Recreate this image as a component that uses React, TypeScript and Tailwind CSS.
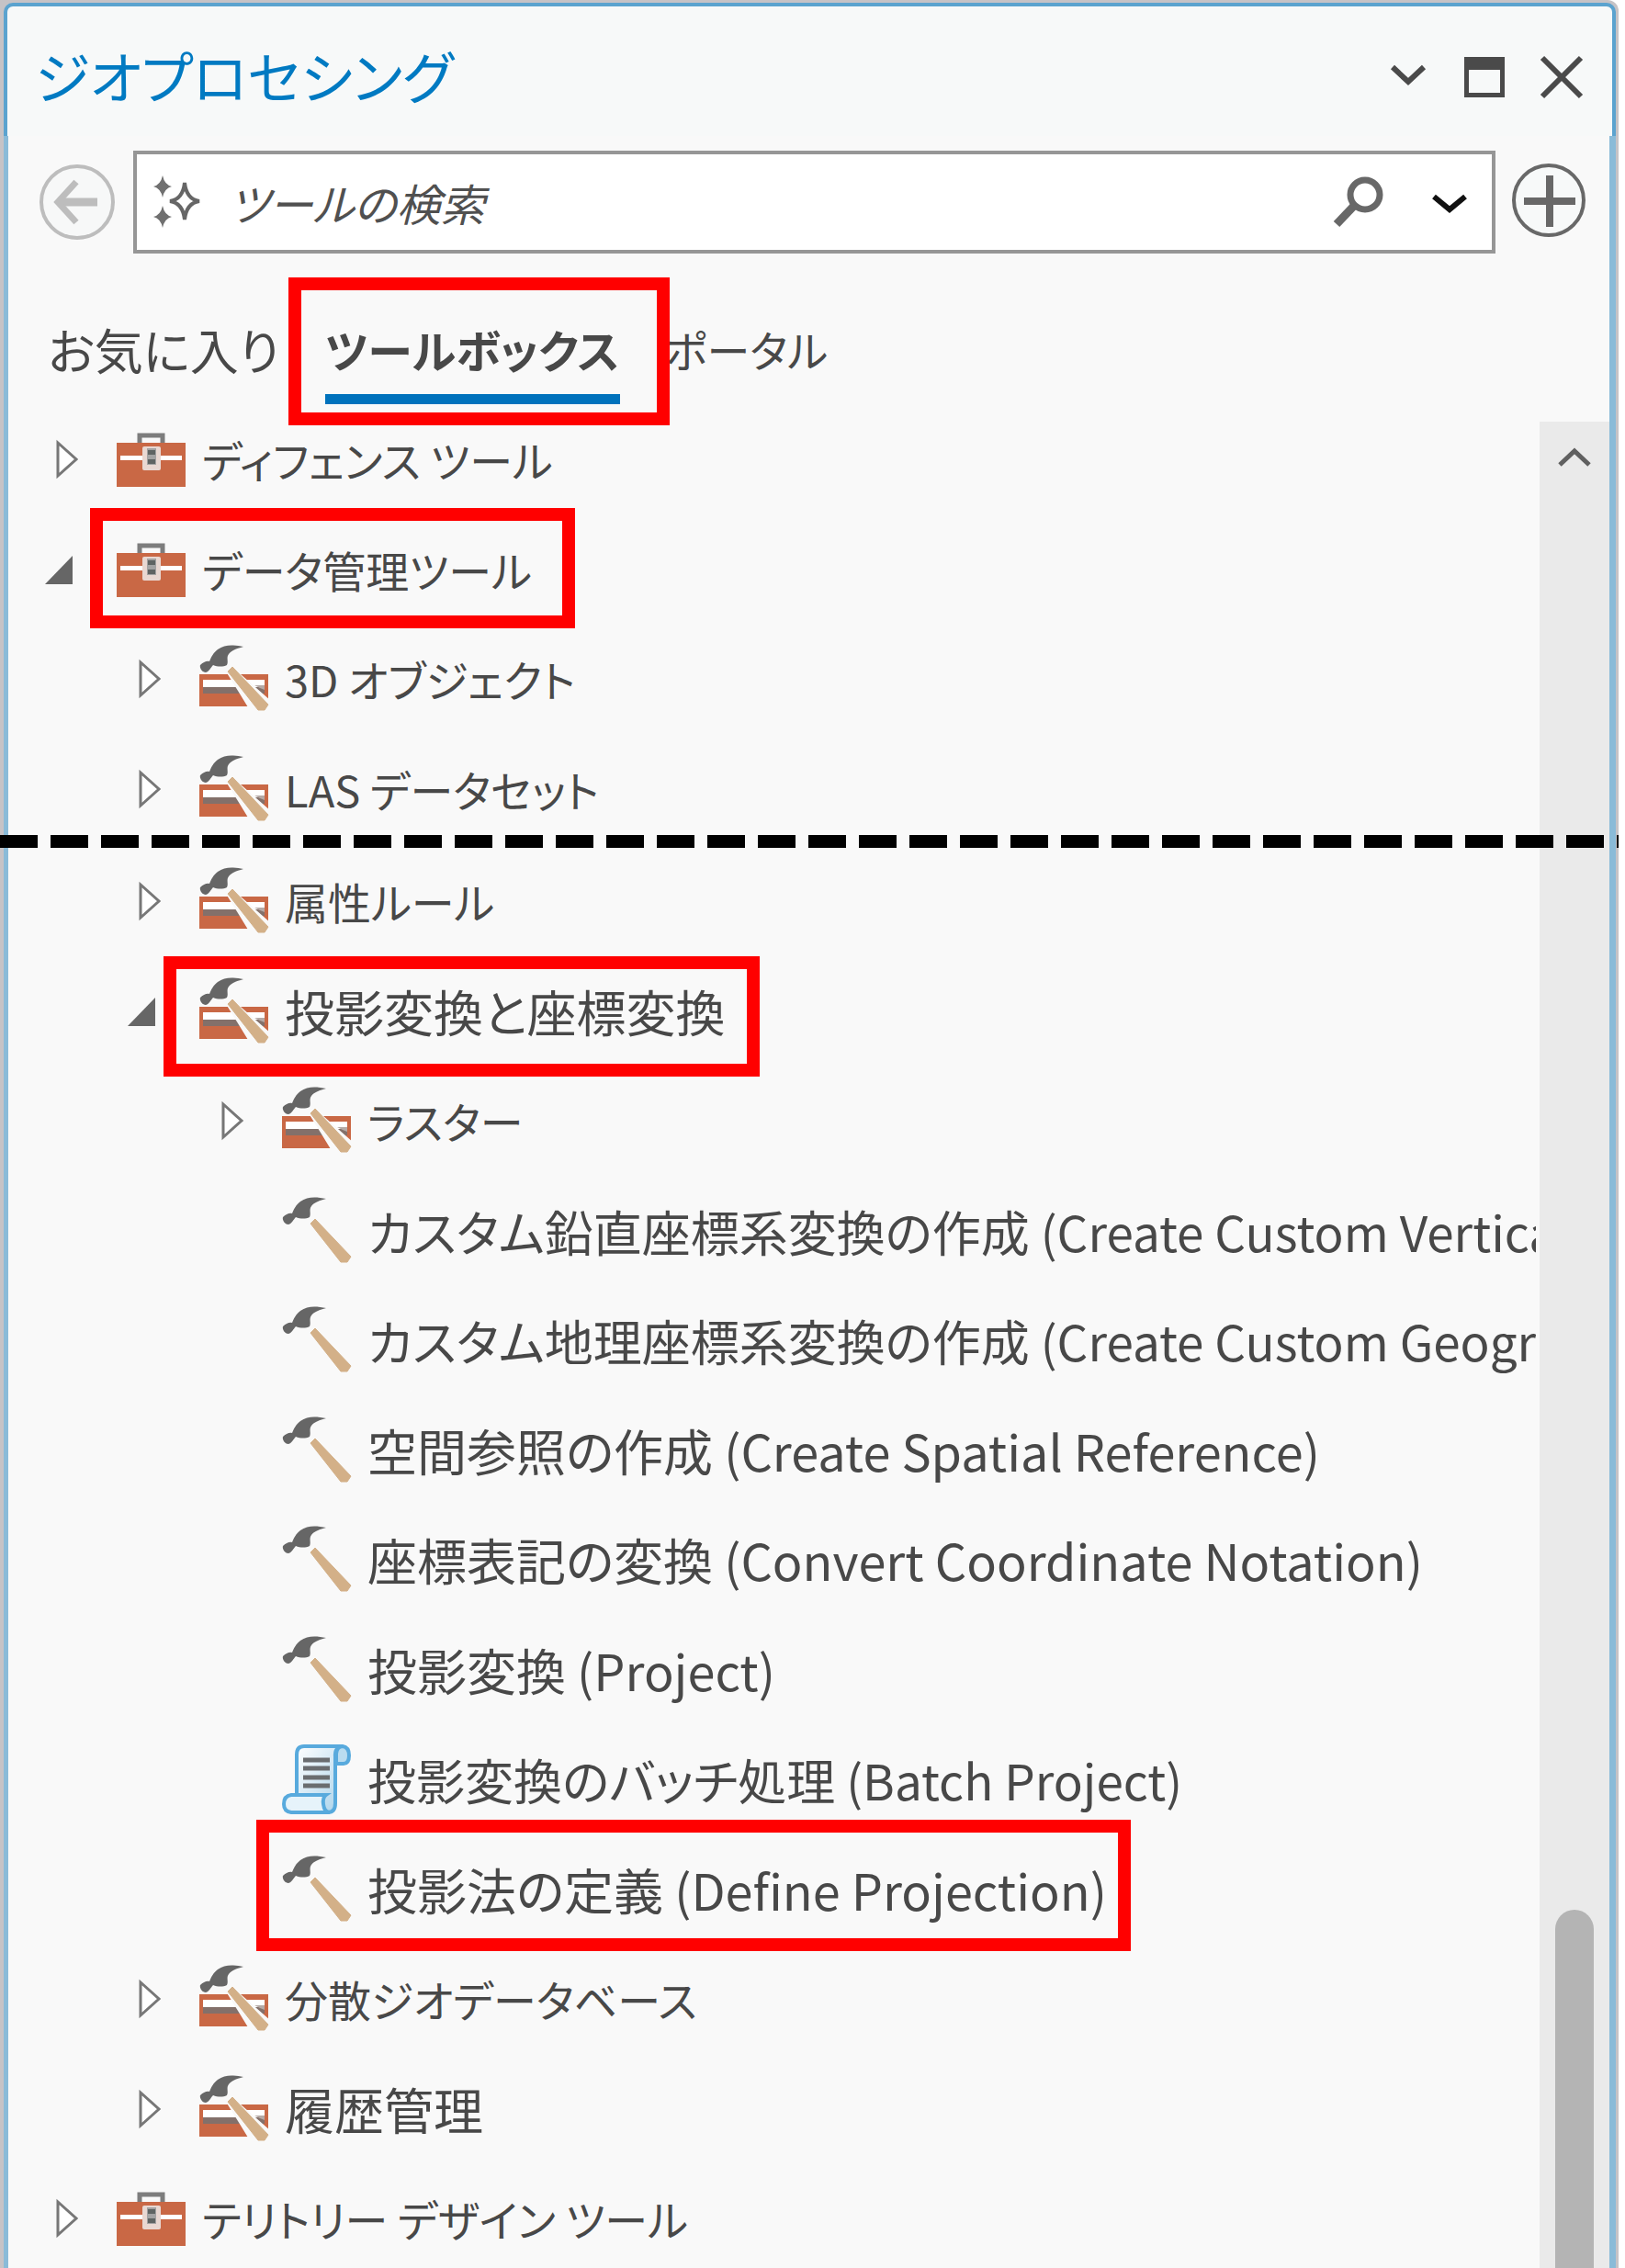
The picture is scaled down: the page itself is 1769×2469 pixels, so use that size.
import { useState } from 'react';
import clsx from 'clsx';

type IconKind = 'toolbox' | 'toolset' | 'tool' | 'script';

interface TreeItem {
    label: string;
    level: 0 | 1 | 2;
    icon: IconKind;
    size: 'kana' | 'mixed' | 'kanji';
    expanded?: boolean;
    mark?: string;
}

const upperItems: TreeItem[] = [
    { label: 'ディフェンス ツール', level: 0, icon: 'toolbox', size: 'kana', expanded: false },
    { label: 'データ管理ツール', level: 0, icon: 'toolbox', size: 'kana', expanded: true, mark: '-left-[29px] -top-[7px] -bottom-[5px] w-[528px]' },
    { label: '3D オブジェクト', level: 1, icon: 'toolset', size: 'kana', expanded: false },
    { label: 'LAS データセット', level: 1, icon: 'toolset', size: 'kana', expanded: false },
];

const lowerItems: TreeItem[] = [
    { label: '属性ルール', level: 1, icon: 'toolset', size: 'kana', expanded: false },
    { label: '投影変換と座標変換', level: 1, icon: 'toolset', size: 'kanji', expanded: true, mark: '-left-[39px] top-0 -bottom-3 w-[649px]' },
    { label: 'ラスター', level: 2, icon: 'toolset', size: 'kana', expanded: false },
    { label: 'カスタム鉛直座標系変換の作成 (Create Custom Vertical Transformation)', level: 2, icon: 'tool', size: 'mixed' },
    { label: 'カスタム地理座標系変換の作成 (Create Custom Geographic Transformation)', level: 2, icon: 'tool', size: 'mixed' },
    { label: '空間参照の作成 (Create Spatial Reference)', level: 2, icon: 'tool', size: 'kanji' },
    { label: '座標表記の変換 (Convert Coordinate Notation)', level: 2, icon: 'tool', size: 'kanji' },
    { label: '投影変換 (Project)', level: 2, icon: 'tool', size: 'kanji' },
    { label: '投影変換のバッチ処理 (Batch Project)', level: 2, icon: 'script', size: 'mixed' },
    { label: '投影法の定義 (Define Projection)', level: 2, icon: 'tool', size: 'kanji', mark: '-left-7 -top-4 -bottom-2 w-[952px]' },
    { label: '分散ジオデータベース', level: 1, icon: 'toolset', size: 'kana', expanded: false },
    { label: '履歴管理', level: 1, icon: 'toolset', size: 'kanji', expanded: false },
    { label: 'テリトリー デザイン ツール', level: 0, icon: 'toolbox', size: 'kana', expanded: false },
];

const indent = ['pl-[36px]', 'pl-[126px]', 'pl-[216px]'];

const labelSize = {
    kana: 'text-[47px]',
    mixed: 'text-[53px]',
    kanji: 'text-[54px]',
};

function Hammer() {
    return (
        <>
            <path d="M48 3C38 1 28 0 20 6C15 10 13 14 11 19C8 18 4 20 1 23C0 26 3 31 7 31C11 30 12 26 15 23C20 25 26 25 30 23C32 19 29 15 32 11C35 7 41 5 48 3Z" fill="#666" />
            <path d="M36 25L31 30L64 72L71 72L75 66Z" fill="#d3b088" stroke="#d3b088" strokeWidth="1" strokeLinejoin="round" />
        </>
    );
}

function ItemIcon({ kind }: { kind: IconKind }) {
    return (
        <svg viewBox="0 0 76 76" className="size-[76px] shrink-0" aria-hidden="true">
            {kind === 'toolbox' && (
                <>
                    <path d="M25 21V12H50V21" fill="none" stroke="#7d7d7d" strokeWidth="5" />
                    <rect x="0" y="20" width="75" height="48" fill="#c96845" />
                    <rect x="4" y="34" width="67" height="5" fill="#fff" />
                    <rect x="28" y="24" width="20" height="26" rx="2" fill="#e9d8d2" />
                    <rect x="33" y="26" width="10" height="18" fill="#a3a3a3" />
                    <rect x="34" y="28" width="8" height="5" fill="#5f6463" />
                    <rect x="34" y="38" width="8" height="5" fill="#5f6463" />
                </>
            )}
            {kind === 'toolset' && (
                <>
                    <rect x="0" y="33" width="75" height="35" fill="#c96845" />
                    <rect x="4" y="39" width="67" height="8" fill="#fff" />
                    <rect x="4" y="47" width="67" height="7" fill="#83706a" />
                    <path d="M29 30L36 25L78 62V69H53L42 51Z" fill="#f9f9f9" />
                    <path d="M56 33H75V57L71 53V39H56Z" fill="#c96845" />
                    <path d="M60 45H71V50L66 48Z" fill="#b5aaa6" />
                    <Hammer />
                </>
            )}
            {kind === 'tool' && <Hammer />}
            {kind === 'script' && (
                <>
                    <defs>
                        <linearGradient id="paper" x1="0" y1="0" x2="1" y2="1">
                            <stop offset="0" stopColor="#fff" />
                            <stop offset="1" stopColor="#a9d2ea" />
                        </linearGradient>
                    </defs>
                    <path d="M16 56V11Q16 2 24 2H66Q57 3 58 14V64Q58 74 50 74H24Z" fill="url(#paper)" stroke="#58aadd" strokeWidth="4" />
                    <path d="M59 21V10Q60 2 66 2Q73 3 73 12Q73 21 67 21Z" fill="#b9dcf0" stroke="#58aadd" strokeWidth="4" />
                    <path d="M10 55H48Q44 58 45 65Q46 74 52 74H10Q2 73 2 65Q2 56 10 55Z" fill="#e6f3fa" stroke="#58aadd" strokeWidth="4" />
                    <path d="M23 17H52M23 26H52M23 36H52M23 45H52" stroke="#6a6d70" strokeWidth="5" />
                </>
            )}
        </svg>
    );
}

function TreeRow({ item }: { item: TreeItem }) {
    const [expanded, setExpanded] = useState(item.expanded);

    return (
        <li className={clsx('flex odd:h-[120px] even:h-[119px] items-center whitespace-nowrap', indent[item.level])}>
            <div className="w-[82px] shrink-0">
                {expanded !== undefined && (
                    <button type="button" aria-label={item.label} onClick={() => setExpanded(!expanded)} className="block">
                        <svg viewBox="0 0 44 44" className="size-11" aria-hidden="true">
                            {expanded ? (
                                <path d="M4 38L34 7V38Z" fill="#666" />
                            ) : (
                                <path d="M18 4V40L38 22Z" fill="#fff" stroke="#777" strokeWidth="3" />
                            )}
                        </svg>
                    </button>
                )}
            </div>
            <div className="relative flex h-full items-center gap-[17px]">
                <ItemIcon kind={item.icon} />
                <span className={labelSize[item.size]}>{item.label}</span>
                {item.mark && <span className={clsx('pointer-events-none absolute z-10 border-[14px] border-[#ff0000]', item.mark)} />}
            </div>
        </li>
    );
}

function TitleBar() {
    return (
        <header className="flex h-[145px] shrink-0 items-center rounded-t-[10px] border-x-[4px] border-t-[4px] border-[#5ba3cf] bg-[#f7f9f9] pt-2 pr-[31px] pl-[30px] text-[#4a4a4a]">
            <h1 className="flex-1 text-[61px] leading-[80px] text-[#007ac2]">ジオプロセシング</h1>
            <div className="flex items-center gap-[38px] pt-1">
                <button type="button" aria-label="メニュー">
                    <svg viewBox="0 0 44 48" className="h-12 w-11" fill="none" stroke="currentColor" strokeWidth="6">
                        <path d="M4 13L21 29L38 13" />
                    </svg>
                </button>
                <button type="button" aria-label="最大化">
                    <svg viewBox="0 0 44 48" className="h-12 w-11">
                        <path fill="currentColor" fillRule="evenodd" d="M0 2H44V46H0ZM5 16V41H39V16Z" />
                    </svg>
                </button>
                <button type="button" aria-label="閉じる">
                    <svg viewBox="0 0 48 48" className="size-12" fill="none" stroke="currentColor" strokeWidth="6">
                        <path d="M3 3L45 45M45 3L3 45" />
                    </svg>
                </button>
            </div>
        </header>
    );
}

function SearchBar() {
    return (
        <div className="flex h-28 shrink-0 items-center">
            <button type="button" aria-label="戻る" className="mr-[19px] ml-[33px] shrink-0">
                <svg viewBox="0 0 84 84" className="size-[84px]" fill="none" stroke="#bdbdbd">
                    <circle cx="42" cy="42" r="39" strokeWidth="4" fill="#f7f8f8" />
                    <path d="M64 42H22" strokeWidth="9" />
                    <path d="M41 20L21 42L41 64" strokeWidth="7" />
                </svg>
            </button>
            <div className="flex h-28 min-w-0 flex-1 items-center border-4 border-[#969696] bg-white pr-6 pl-4">
                <svg viewBox="0 0 56 60" className="h-[60px] w-14 shrink-0" fill="#707070">
                    <path d="M36 9Q38 27 52 29Q38 31 36 49Q34 31 20 29Q34 27 36 9Z" fill="#fff" stroke="#666" strokeWidth="4" />
                    <path d="M12 1Q14 11 22 13Q14 15 12 25Q10 15 2 13Q10 11 12 1Z" />
                    <path d="M12 34Q14 44 22 46Q14 48 12 58Q10 48 2 46Q10 44 12 34Z" />
                </svg>
                <input
                    type="text"
                    aria-label="ツールの検索"
                    placeholder="ツールの検索"
                    className="ml-7 min-w-0 flex-1 text-[48px] leading-[72px] italic outline-none placeholder:text-[#505050] placeholder:opacity-100"
                />
                <button type="button" aria-label="検索" className="shrink-0">
                    <svg viewBox="0 0 56 56" className="size-14" fill="none" stroke="#686868">
                        <circle cx="36" cy="20" r="16" strokeWidth="7" />
                        <path d="M25 31L5 52" strokeWidth="9" />
                    </svg>
                </button>
                <button type="button" aria-label="検索オプション" className="ml-[50px] shrink-0">
                    <svg viewBox="0 0 44 44" className="size-11" fill="none" stroke="#111" strokeWidth="6">
                        <path d="M5 16L22 30L39 16" />
                    </svg>
                </button>
            </div>
            <button type="button" aria-label="追加" className="mr-6 ml-4 shrink-0">
                <svg viewBox="0 0 84 84" className="size-[84px]" fill="none" stroke="#686868">
                    <circle cx="42" cy="40" r="38" strokeWidth="4" fill="#f7f9f9" />
                    <path d="M15 41H71M43 13V69" strokeWidth="8" />
                </svg>
            </button>
        </div>
    );
}

function Tabs() {
    return (
        <nav role="tablist" className="flex h-[164px] shrink-0 items-end pl-[43px]">
            <button type="button" role="tab" aria-selected="false" className="h-[104px] pb-4 text-[53px]">お気に入り</button>
            <button type="button" role="tab" aria-selected="true" className="relative mx-[50px] h-[104px] border-b-[11px] border-[#0072bc] pb-[5px] text-[49px] font-bold">
                ツールボックス
                <span className="pointer-events-none absolute -top-[34px] -right-[54px] -bottom-[34px] -left-10 z-10 border-[14px] border-[#ff0000]" />
            </button>
            <button type="button" role="tab" aria-selected="false" className="h-[104px] pb-4 text-[47px]">ポータル</button>
        </nav>
    );
}

export default function App() {
    return (
        <div className="relative h-screen overflow-hidden bg-white pr-[7px] font-['Noto_Sans_CJK_JP',sans-serif] leading-[72px] text-[#484848] [font-feature-settings:'palt']">
            <div className="flex h-full flex-col rounded-tr-xl bg-[#c6c3c6] pt-[3px] pr-[3px] pl-1">
                <TitleBar />
                <main className="flex min-h-0 flex-1 flex-col border-r-[7px] border-l-[5px] border-[#8abbd8] bg-[#f9f9f9] pt-4">
                    <SearchBar />
                    <Tabs />
                    <div className="flex min-h-0 flex-1">
                        <div className="min-w-0 flex-1 overflow-hidden">
                            <ul>
                                {upperItems.map(item => <TreeRow key={item.label} item={item} />)}
                            </ul>
                            {/* cut mark between the two parts of the tree */}
                            <div className="absolute inset-x-0 z-10 mr-[7px] -mt-[9px] h-[14px] bg-[repeating-linear-gradient(90deg,#000_0_41px,transparent_41px_55px)]" />
                            <ul className="mt-[3px]">
                                {lowerItems.map(item => <TreeRow key={item.label} item={item} />)}
                            </ul>
                        </div>
                        <div className="mt-[19px] ml-1 flex w-[76px] shrink-0 flex-col items-center bg-[#eaeaea]">
                            <button type="button" aria-label="上へスクロール" className="mt-4">
                                <svg viewBox="0 0 44 44" className="size-11" fill="none" stroke="#606060" strokeWidth="5">
                                    <path d="M6 31L22 16L38 31" />
                                </svg>
                            </button>
                            <div className="mt-[1560px] w-[42px] flex-1 rounded-t-full bg-[#b4b4b4]" />
                        </div>
                    </div>
                </main>
            </div>
        </div>
    );
}
